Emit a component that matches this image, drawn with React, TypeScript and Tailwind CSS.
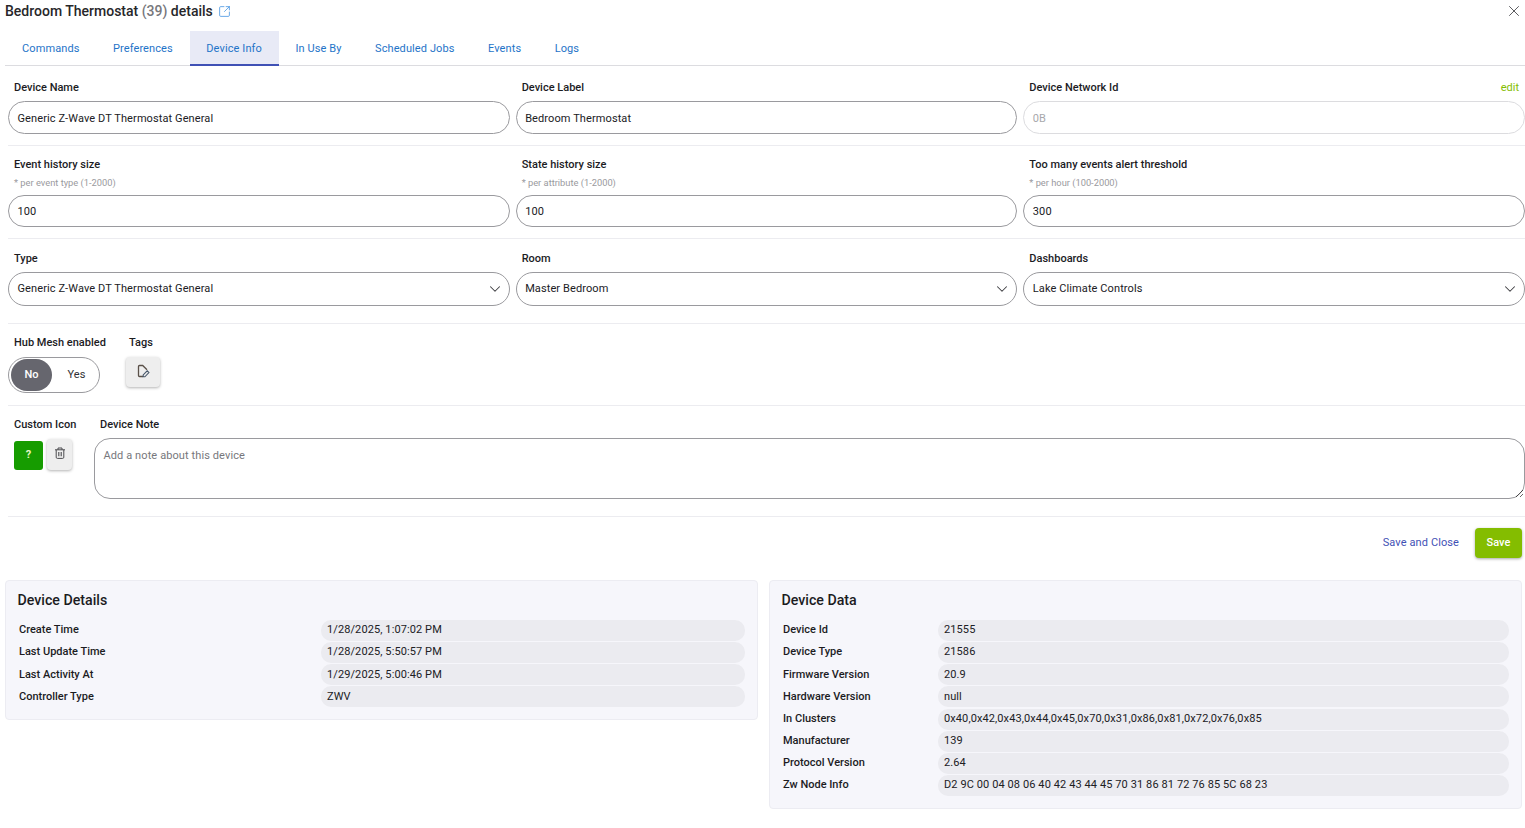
import { ChevronDown, SquareArrowOutUpRight, X } from 'lucide-react';

const tabs = ['Commands', 'Preferences', 'Device Info', 'In Use By', 'Scheduled Jobs', 'Events', 'Logs'];

const deviceDetails = [
  ['Create Time', '1/28/2025, 1:07:02 PM'],
  ['Last Update Time', '1/28/2025, 5:50:57 PM'],
  ['Last Activity At', '1/29/2025, 5:00:46 PM'],
  ['Controller Type', 'ZWV'],
];

const deviceData = [
  ['Device Id', '21555'],
  ['Device Type', '21586'],
  ['Firmware Version', '20.9'],
  ['Hardware Version', 'null'],
  ['In Clusters', '0x40,0x42,0x43,0x44,0x45,0x70,0x31,0x86,0x81,0x72,0x76,0x85'],
  ['Manufacturer', '139'],
  ['Protocol Version', '2.64'],
  ['Zw Node Info', 'D2 9C 00 04 08 06 40 42 43 44 45 70 31 86 81 72 76 85 5C 68 23'],
];

function Label({ children }: { children: React.ReactNode }) {
  return <div className="text-[11px] leading-[14px] font-medium whitespace-nowrap text-[#1c1c1f]">{children}</div>;
}

function TextField({ label, value }: { label: string; value: string }) {
  return (
    <div>
      <div className="pl-[6px]">
        <Label>{label}</Label>
      </div>
      <div className="mt-[6px] flex h-[33px] items-center rounded-[17px] border border-[#9a9a9e] bg-white pt-[3px] pl-[8.5px] text-[11px] tracking-[0.1px] text-[#202024]">
        {value}
      </div>
    </div>
  );
}

function NumberField({ label, hint, value }: { label: string; hint: string; value: string }) {
  return (
    <div>
      <div className="pl-[6px]">
        <Label>{label}</Label>
        <div className="mt-[5px] text-[9.3px] leading-[12px] text-[#9a9a9e]">{hint}</div>
      </div>
      <div className="mt-[6px] flex h-[32px] items-center rounded-[16px] border border-[#9a9a9e] bg-white pt-[2px] pl-[8.5px] text-[11px] tracking-[0.1px] text-[#202024]">
        {value}
      </div>
    </div>
  );
}

function SelectField({ label, value }: { label: string; value: string }) {
  return (
    <div>
      <div className="pl-[6px]">
        <Label>{label}</Label>
      </div>
      <div className="mt-[6px] flex h-[34px] items-center justify-between rounded-[17px] border border-[#9a9a9e] bg-white pr-[5px] pl-[8.5px] text-[11px] tracking-[0.1px] text-[#202024]">
        {value}
        <ChevronDown className="h-[18px] w-[18px] text-[#3c3c40]" strokeWidth={1.4} />
      </div>
    </div>
  );
}

function InfoCard({ title, rows, labelWidth }: { title: string; rows: string[][]; labelWidth: string }) {
  return (
    <div className="rounded-[4px] border border-[#ececf2] bg-[#f6f6fb] pt-[10px] pr-[12px] pb-[12px] pl-[11.5px]">
      <div className="text-[14.2px] leading-[18px] font-medium text-[#1c1c1f]">{title}</div>
      <div className="mt-[11px] flex flex-col gap-[1.15px]">
        {rows.map(([name, val]) => (
          <div key={name} className="flex items-center">
            <div className={`${labelWidth} shrink-0 pl-[1.5px] text-[11px] font-medium text-[#1c1c1f]`}>{name}</div>
            <div className="flex h-[21px] flex-1 items-center rounded-[10px] bg-[#ebebf0] pl-[6px] text-[11px] tracking-[0.1px] text-[#202024]">
              {val}
            </div>
          </div>
        ))}
      </div>
    </div>
  );
}

export default function App() {
  return (
    <div className="min-h-screen bg-white font-['Roboto',sans-serif]">
      <div className="flex h-[22px] items-center justify-between pr-[2.5px] pl-[5px]">
        <div className="flex items-center text-[14px] font-medium text-[#27272a]">
          Bedroom Thermostat&nbsp;<span className="text-[#77777c]">(39)</span>&nbsp;details
          <SquareArrowOutUpRight className="ml-[5px] h-[13px] w-[13px] text-[#3b8fe0]" strokeWidth={1.4} />
        </div>
        <X className="h-[18px] w-[18px] text-[#4a4a4e]" strokeWidth={1.2} />
      </div>

      <div className="mt-[9px] ml-[5px] flex h-[35px] border-b border-[#dcdce0] pl-[0.25px]">
        {tabs.map((tab) => (
          <div
            key={tab}
            className={`flex items-center px-[16.75px] text-[11px] tracking-[0.1px] text-[#1f74c8] ${
              tab === 'Device Info' ? 'h-[35px] border-b-2 border-[#3f51b5] bg-[#e8eaf6] pt-[3px]' : 'pt-[2px]'
            }`}
          >
            {tab}
          </div>
        ))}
      </div>

      <div className="pl-[8px]">
        <div className="grid grid-cols-3 gap-x-[6px] border-b border-[#ececf0] pt-[15px] pb-[11px]">
          <TextField label="Device Name" value="Generic Z-Wave DT Thermostat General" />
          <TextField label="Device Label" value="Bedroom Thermostat" />
          <div>
            <div className="flex justify-between pr-[6px] pl-[6px]">
              <Label>Device Network Id</Label>
              <span className="text-[11px] leading-[14px] text-[#84bd00]">edit</span>
            </div>
            <div className="mt-[6px] flex h-[33px] items-center rounded-[17px] border border-[#dcdcdf] bg-white pt-[3px] pl-[8.5px] text-[11px] text-[#a8a8ac]">
              0B
            </div>
          </div>
        </div>

        <div className="grid grid-cols-3 gap-x-[6px] border-b border-[#ececf0] pt-[12px] pb-[11px]">
          <NumberField label="Event history size" hint="* per event type (1-2000)" value="100" />
          <NumberField label="State history size" hint="* per attribute (1-2000)" value="100" />
          <NumberField label="Too many events alert threshold" hint="* per hour (100-2000)" value="300" />
        </div>

        <div className="grid grid-cols-3 gap-x-[6px] border-b border-[#ececf0] pt-[13px] pb-[17px]">
          <SelectField label="Type" value="Generic Z-Wave DT Thermostat General" />
          <SelectField label="Room" value="Master Bedroom" />
          <SelectField label="Dashboards" value="Lake Climate Controls" />
        </div>

        <div className="flex border-b border-[#ececf0] pt-[12px] pb-[12px]">
          <div className="w-[99px]">
            <div className="pl-[6px]">
              <Label>Hub Mesh enabled</Label>
            </div>
            <div className="mt-[7px] flex h-[36px] w-[92px] items-center rounded-[18px] border border-[#9a9a9e] pl-[2px] text-[11px]">
              <div className="flex h-[32px] w-[41px] items-center justify-center rounded-[16px] bg-[#66666e] font-medium text-white">
                No
              </div>
              <div className="flex-1 pl-[2px] text-center tracking-[0.1px] text-[#303034]">Yes</div>
            </div>
          </div>
          <div className="ml-[19px]">
            <div className="pl-[3px]">
              <Label>Tags</Label>
            </div>
            <div className="mt-[7px] flex h-[30px] w-[34px] items-center justify-center rounded-[4px] bg-[#eeeeee] shadow-[0_1px_3px_rgba(0,0,0,0.3)]">
              <svg viewBox="0 0 14 14" className="-mt-[3px] h-[14px] w-[14px]" fill="none">
                <path d="M7 12.5H3.5a1 1 0 0 1-1-1v-9a1 1 0 0 1 1-1h3.2L11 5.8" stroke="#5a5048" strokeWidth="1.3" />
                <path d="M7.2 12.8v-1.9l4-4 1.7 1.7-4 4.2z" stroke="#46566a" strokeWidth="1.1" fill="#eeeeee" />
              </svg>
            </div>
          </div>
        </div>

        <div className="flex border-b border-[#ececf0] pt-[12px] pb-[17px]">
          <div className="w-[86px] shrink-0">
            <div className="pl-[6px]">
              <Label>Custom Icon</Label>
            </div>
            <div className="mt-[7px] flex pl-[6px]">
              <div className="mt-[2px] flex h-[29px] w-[29px] items-center justify-center rounded-[3px] bg-[#169c00] text-[11px] font-bold text-[#e8f5c0]">
                ?
              </div>
              <div className="ml-[4px] flex h-[31px] w-[25px] justify-center rounded-[4px] bg-[#eeeeee] pt-[8px] shadow-[0_1px_3px_rgba(0,0,0,0.3)]">
                <svg viewBox="0 0 12 12" className="h-[12px] w-[12px]" fill="none" stroke="#4a4a4e" strokeWidth="1">
                  <path d="M1 2.8h10M4 2.8V1h4v1.8M2.2 2.8v7.4a1.2 1.2 0 0 0 1.2 1.2h5.2a1.2 1.2 0 0 0 1.2-1.2V2.8" />
                  <path d="M4.8 5v4.2M7.2 5v4.2" strokeWidth="1.1" />
                </svg>
              </div>
            </div>
          </div>
          <div className="flex-1">
            <div className="pl-[6px]">
              <Label>Device Note</Label>
            </div>
            <textarea
              readOnly
              placeholder="Add a note about this device"
              className="mt-[6px] block h-[61px] w-full rounded-[16px] border border-[#9a9a9e] px-[8.5px] py-[9px] text-[11px] tracking-[0.1px] text-[#202024] outline-none placeholder:text-[#77777c]"
            />
          </div>
        </div>
      </div>

      <div className="flex items-center justify-end pt-[11px] pr-[3px] pb-[22px]">
        <span className="pt-[1px] text-[11px] tracking-[0.1px] text-[#3f51b5]">Save and Close</span>
        <div className="ml-[16px] flex h-[30px] w-[47px] items-center justify-center rounded-[4px] bg-[#84bd00] pt-[1px] text-[11px] font-medium text-white shadow-[0_1px_3px_rgba(0,0,0,0.35)]">
          Save
        </div>
      </div>

      <div className="grid grid-cols-2 items-start gap-x-[11px] pr-[3px] pl-[5px]">
        <InfoCard title="Device Details" rows={deviceDetails} labelWidth="w-[303.5px]" />
        <InfoCard title="Device Data" rows={deviceData} labelWidth="w-[156.5px]" />
      </div>
    </div>
  );
}
